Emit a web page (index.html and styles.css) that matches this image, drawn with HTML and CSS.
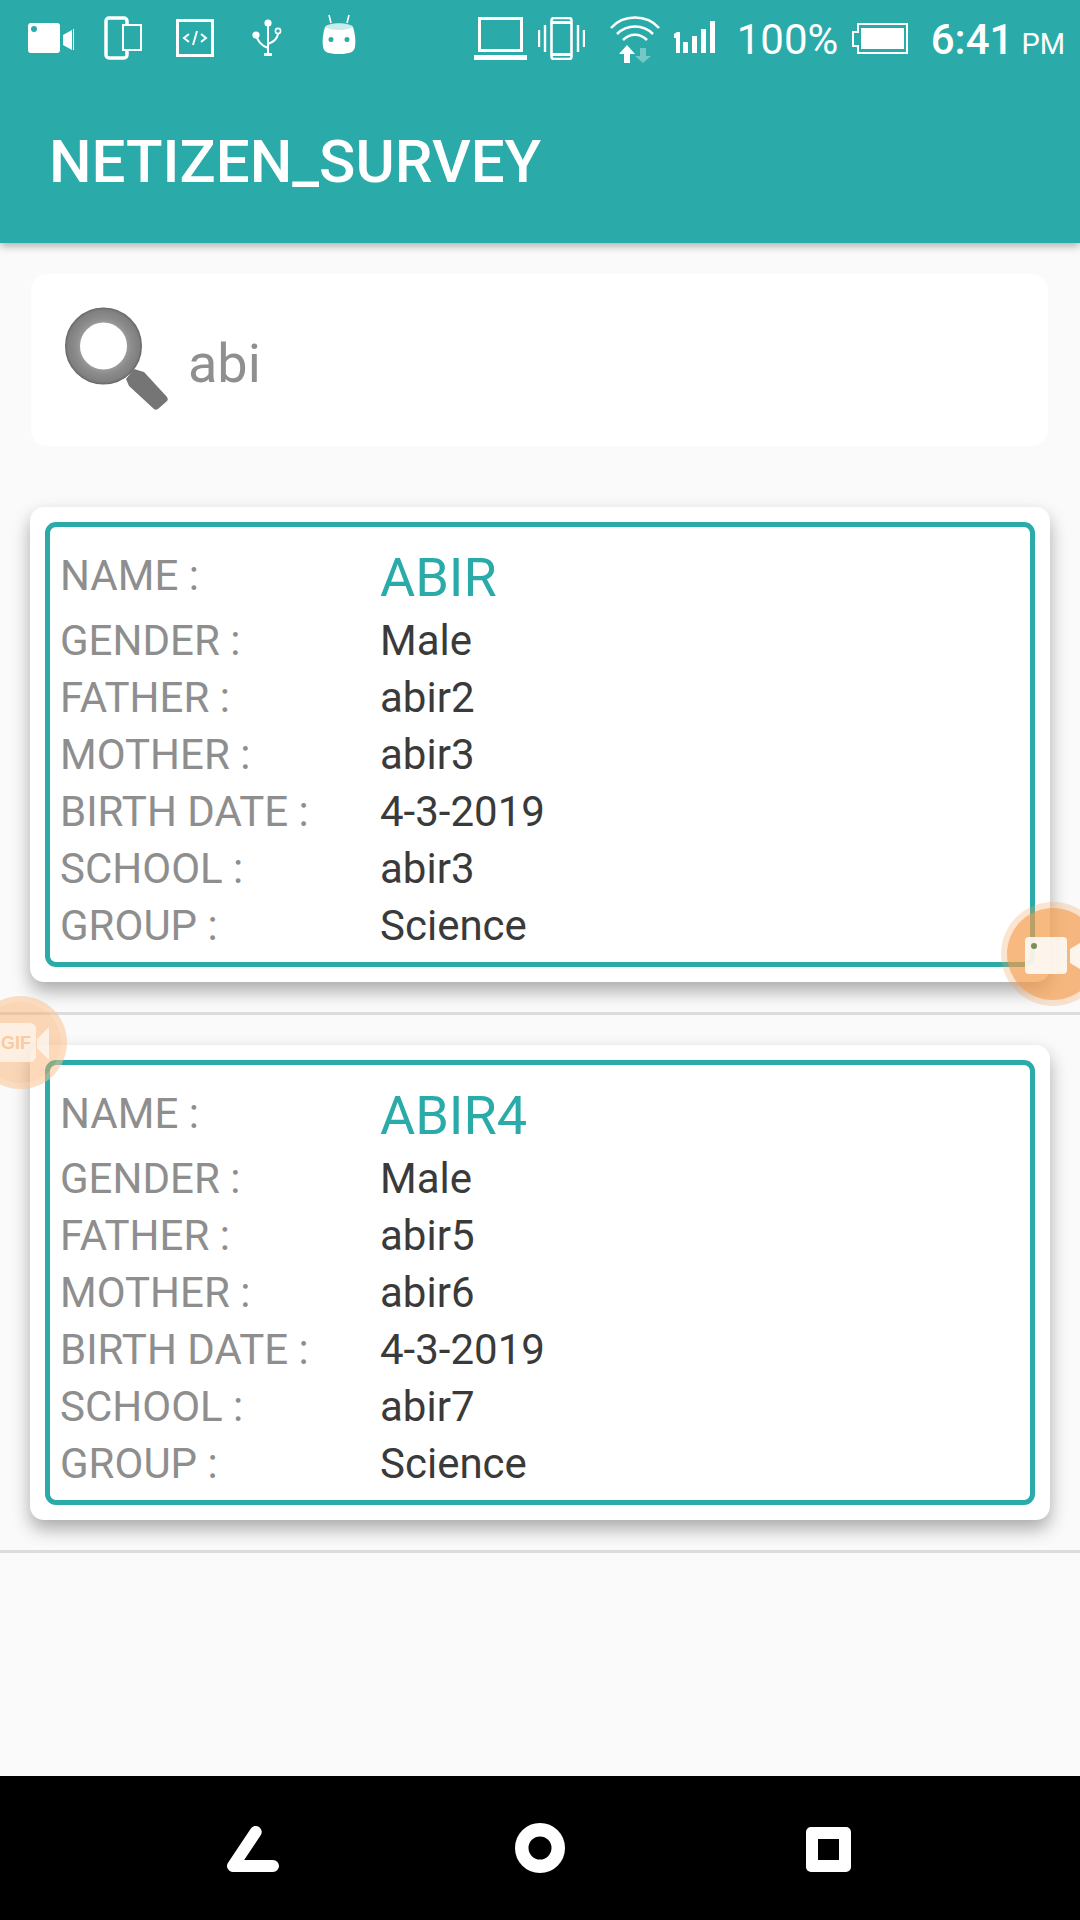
FILE: index.html
```html
<!DOCTYPE html>
<html lang="en">
<head>
<meta charset="utf-8">
<title>NETIZEN_SURVEY</title>
<link rel="stylesheet" href="styles.css">
</head>
<body>
<div class="screen">
  <header class="appbar">
    <div class="status">
      <div class="status-left">
        <svg class="i-video" viewBox="0 0 48 32"><path fill="#fff" fill-rule="evenodd" d="M4 1h26a3 3 0 0 1 3 3v24a3 3 0 0 1-3 3H4a3 3 0 0 1-3-3V4a3 3 0 0 1 3-3zm3 3a3 3 0 1 0 0 6 3 3 0 0 0 0-6z"/><path fill="#fff" d="M36 13l9-5v20l-9-5z"/><rect x="46" y="7" width="1" height="21" fill="#fff"/></svg>
        <svg class="i-devices" viewBox="0 0 38 44"><rect x="2" y="2" width="21" height="40" rx="3" fill="none" stroke="#fff" stroke-width="3.5"/><rect x="19" y="9" width="18" height="25" fill="#2aaba9" stroke="#fff" stroke-width="2"/></svg>
        <svg class="i-code" viewBox="0 0 38 38"><rect x="1.5" y="1.5" width="35" height="35" fill="none" stroke="#fff" stroke-width="3"/><path d="M13 15l-5 4 5 4M25 15l5 4-5 4M21 12l-4 14" fill="none" stroke="#fff" stroke-width="2"/></svg>
        <svg class="i-usb" viewBox="0 0 31 38"><circle cx="17" cy="4" r="3.6" fill="#fff"/><path d="M17 6v29M17 29C9 26 7 21 5 17M17 25c6-2 9-5 10-10" fill="none" stroke="#fff" stroke-width="2"/><circle cx="5" cy="16" r="3.6" fill="#fff"/><circle cx="27" cy="12" r="2.6" fill="none" stroke="#fff" stroke-width="1.6"/><rect x="13" y="34" width="8" height="3" fill="#fff"/></svg>
        <svg class="i-android" viewBox="0 0 34 42"><path d="M7 1l2 8M27 1l-2 8" stroke="#fff" stroke-width="1.6"/><path fill="#c9ecea" d="M3 13c3-5 25-5 28 0l-1 3H4z"/><path fill="#fff" fill-rule="evenodd" d="M3 13c6 4 22 4 28 0 2 6 3 14 2 20-1 5-5 7-16 7S2 38 1 33c-1-6 0-14 2-20zm6 10a2.500 2.500 0 1 0 0 5 2.500 2.500 0 0 0 0-5zm16 0a2.500 2.500 0 1 0 0 5 2.500 2.500 0 0 0 0-5z"/></svg>
      </div>
      <div class="status-right">
        <svg class="i-laptop" viewBox="0 0 53 43"><rect x="5.500" y="1.500" width="42" height="32" fill="none" stroke="#fff" stroke-width="3"/><rect x="0" y="38" width="53" height="5" fill="#fff"/></svg>
        <svg class="i-vibrate" viewBox="0 0 47 43"><rect x="13.500" y="1" width="20" height="41" rx="2.500" fill="none" stroke="#fff" stroke-width="2.600"/><path d="M13 5.500h21M13 37.500h21" stroke="#fff" stroke-width="3"/><path d="M1 13v17M7 8v27M40 8v27M46 13v17" stroke="#fff" stroke-width="2.400"/></svg>
        <svg class="i-wifi" viewBox="0 0 52 49"><path d="M2 14C14 0 38 0 50 14M8 20c10-10 26-10 36 0M14 26c7-7 17-7 24 0" fill="none" stroke="#fff" stroke-width="2.600"/><path fill="#fff" d="M18 31l8 9h-5v9h-6v-9h-5z"/><path fill="#fff" opacity=".35" d="M31 34h6v8h5l-8 7-8-7h5z"/></svg>
        <svg class="i-signal" viewBox="0 0 45 32"><path fill="#fff" d="M0 13l3-2h3v21H2V17H0zM9 21h5v11H9zM18 15h5v17h-5zM27 8h5v24h-5zM36 0h5v32h-5z"/></svg>
        <span class="pct">100%</span>
        <svg class="i-battery" viewBox="0 0 57 31"><path d="M7 1h49v29H7v-7H2V9h5z" fill="none" stroke="#fff" stroke-width="2"/><path fill="#fff" d="M10 5h43v21H10z"/></svg>
        <span class="clock">6:41</span>
        <span class="ampm">PM</span>
      </div>
    </div>
    <h1 class="title">NETIZEN_SURVEY</h1>
  </header>

  <main class="content">
    <div class="search">
      <svg class="i-search" viewBox="0 0 104 104">
        <defs>
          <radialGradient id="ringGrad" gradientUnits="userSpaceOnUse" cx="39.500" cy="39" r="39">
            <stop offset="0.6" stop-color="#9a9a9a"/>
            <stop offset="0.72" stop-color="#8c8c8c"/>
            <stop offset="0.92" stop-color="#7f7f7f"/>
            <stop offset="1" stop-color="#5f5f5f"/>
          </radialGradient>
        </defs>
        <path fill="#757575" d="M70 62l10 3 23 25c1 2 1 3 0 4l-9 8c-2 1-3 1-4 0L65 79l-3-7z"/>
        <circle cx="39.500" cy="39" r="31" fill="#fff" stroke="url(#ringGrad)" stroke-width="15"/>
      </svg>
      <span class="query">abi</span>
    </div>

    <section class="result">
      <article class="card">
        <div class="frame">
          <div class="row row-name"><span class="label">NAME :</span><span class="value name">ABIR</span></div>
          <div class="row"><span class="label">GENDER :</span><span class="value">Male</span></div>
          <div class="row"><span class="label">FATHER :</span><span class="value">abir2</span></div>
          <div class="row"><span class="label">MOTHER :</span><span class="value">abir3</span></div>
          <div class="row"><span class="label">BIRTH DATE :</span><span class="value">4-3-2019</span></div>
          <div class="row"><span class="label">SCHOOL :</span><span class="value">abir3</span></div>
          <div class="row"><span class="label">GROUP :</span><span class="value">Science</span></div>
        </div>
      </article>
    </section>

    <section class="result">
      <article class="card">
        <div class="frame">
          <div class="row row-name"><span class="label">NAME :</span><span class="value name">ABIR4</span></div>
          <div class="row"><span class="label">GENDER :</span><span class="value">Male</span></div>
          <div class="row"><span class="label">FATHER :</span><span class="value">abir5</span></div>
          <div class="row"><span class="label">MOTHER :</span><span class="value">abir6</span></div>
          <div class="row"><span class="label">BIRTH DATE :</span><span class="value">4-3-2019</span></div>
          <div class="row"><span class="label">SCHOOL :</span><span class="value">abir7</span></div>
          <div class="row"><span class="label">GROUP :</span><span class="value">Science</span></div>
        </div>
      </article>
    </section>
  </main>

  <nav class="navbar">
    <svg class="i-back" viewBox="0 0 53 46"><path d="M29.700 6L7 40h40" fill="none" stroke="#fff" stroke-width="12" stroke-linecap="round" stroke-linejoin="round"/></svg>
    <svg class="i-home" viewBox="0 0 50 50"><circle cx="25" cy="25" r="18.250" fill="none" stroke="#fff" stroke-width="13.500"/></svg>
    <svg class="i-recent" viewBox="0 0 45 45"><path fill="#fff" fill-rule="evenodd" d="M5 0h35a5 5 0 0 1 5 5v35a5 5 0 0 1-5 5H5a5 5 0 0 1-5-5V5a5 5 0 0 1 5-5zm7 12v21h21V12z"/></svg>
  </nav>

  <div class="float float-rec">
    <svg class="float-icon-rec" viewBox="0 0 55 38"><rect x="0" y="0" width="42" height="37" rx="4" fill="#fff"/><path fill="#fff" d="M45 12l10-6v26l-10-6z"/></svg>
    <span class="rec-dot"></span>
  </div>
  <div class="float float-gif">
    <div class="gif-cam"><span class="gif-text">GIF</span><svg class="gif-lens" viewBox="0 0 12 33"><path fill="#fff" d="M0 12L12 0v33L0 21z"/></svg></div>
  </div>
</div>
</body>
</html>
```
FILE: styles.css
```css
* { box-sizing: border-box; }
html, body { margin: 0; padding: 0; }
body { font-family: Roboto, "Noto Sans", sans-serif; background: #fafafa; }
.screen { position: relative; width: 1080px; height: 1920px; overflow: hidden; display: flex; flex-direction: column; background: #fafafa; }

.appbar { height: 243px; background: #2aaba9; box-shadow: 0 3px 8px rgba(0,0,0,.3); position: relative; z-index: 2; flex: none; }
.status { height: 76px; display: flex; justify-content: space-between; align-items: center; }
.status svg { display: block; flex: none; }
.status-left { display: flex; align-items: center; padding-left: 27px; }
.status-right { display: flex; align-items: center; }
.i-video { width: 48px; height: 32px; }
.i-devices { width: 38px; height: 44px; margin-left: 29px; }
.i-code { width: 38px; height: 38px; margin-left: 34px; }
.i-usb { width: 31px; height: 38px; margin-left: 37px; }
.i-android { width: 34px; height: 42px; margin-left: 40px; margin-top: -7px; }
.i-laptop { width: 53px; height: 43px; }
.i-vibrate { width: 47px; height: 43px; margin-left: 11px; }
.i-wifi { width: 52px; height: 49px; margin-left: 24px; }
.i-signal { width: 45px; height: 32px; margin-left: 13px; margin-top: -2px; }
.pct { font-size: 42px; font-weight: 400; color: #fff; margin-left: 18px; margin-top: 4px; line-height: 1; width: 100px; white-space: nowrap; }
.i-battery { width: 57px; height: 31px; margin-left: 14px; }
.clock { font-size: 42px; font-weight: 500; color: #fff; margin-left: 23px; margin-top: 4px; line-height: 1; }
.ampm { font-size: 29px; color: #fff; margin-left: 8px; margin-right: 15px; margin-top: 12px; line-height: 1; }

.title { margin: 0; padding: 51px 0 0 49px; font-size: 60px; line-height: 70px; font-weight: 500; color: #fff; }

.content { flex: 1; padding: 31px 30px 0; }
.search { height: 172px; margin: 0 2px 0 1px; background: #fff; border-radius: 16px; display: flex; align-items: center; padding-left: 33px; }
.i-search { width: 104px; height: 104px; flex: none; margin-top: -3px; }
.query { font-size: 54px; color: #8f8f8f; margin-left: 20px; line-height: 1; margin-top: 8px; }

.result { margin-top: 61px; }
.result + .result { margin-top: 30px; }
.result::after { content: ""; display: block; height: 3px; margin: 30px -30px 0; background: #dcdcdc; }
.card { height: 475px; background: #fff; border-radius: 14px; padding: 15px; box-shadow: 0 9px 18px rgba(0,0,0,.32); }
.frame { height: 445px; border: 5px solid #2aaba9; border-radius: 11px; padding: 16px 10px 8px; }
.row { display: flex; align-items: center; height: 57px; font-size: 42px; line-height: 1; }
.row-name { height: 69px; }
.row-name .label { margin-bottom: 3px; }
.label { width: 320px; flex: none; color: #8e8e8e; white-space: nowrap; }
.value { color: #3a3a3a; }
.name { font-size: 54px; color: #2aaba9; }

.navbar { height: 144px; flex: none; background: #000; position: relative; z-index: 2; display: flex; align-items: center; padding: 0 229px 0 226px; justify-content: space-between; }
.navbar svg { display: block; }
.i-back { width: 53px; height: 46px; margin-top: 2px; }
.i-home { width: 50px; height: 50px; margin-right: 5px; }
.i-recent { width: 45px; height: 45px; margin-top: 2px; }

.float { position: absolute; z-index: 5; border-radius: 50%; }
.float-rec { left: 1001px; top: 902px; width: 104px; height: 104px; background: rgba(243,160,85,.28); }
.float-rec::before { content: ""; position: absolute; inset: 6px; border-radius: 50%; background: rgba(243,155,75,.6); }
.float-icon-rec { position: absolute; left: 24px; top: 35px; width: 55px; height: 38px; opacity: .85; }
.rec-dot { position: absolute; left: 30px; top: 41px; width: 6px; height: 6px; border-radius: 50%; background: #7d8c5a; }
.float-gif { left: -26px; top: 996px; width: 93px; height: 93px; background: rgba(250,170,100,.45); box-shadow: inset 0 0 0 6px rgba(255,255,255,.15); }
.gif-cam { position: absolute; left: 0; top: 27px; width: 62px; height: 39px; background: rgba(255,255,255,.6); border-radius: 6px; display: flex; align-items: center; justify-content: flex-end; padding-right: 5px; }
.gif-text { font-size: 18px; font-weight: 700; color: #fbcb9f; line-height: 1; font-family: "Liberation Sans", sans-serif; }
.gif-lens { position: absolute; left: 63px; top: 4px; width: 12px; height: 33px; opacity: .65; }
```
